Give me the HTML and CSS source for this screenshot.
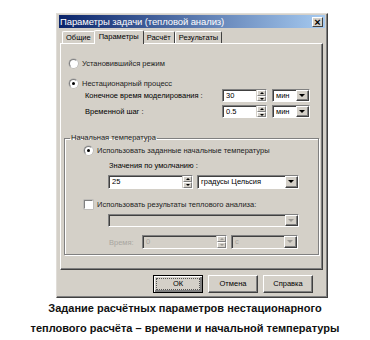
FILE: index.html
```html
<!DOCTYPE html>
<html lang="ru">
<head>
    <meta charset="UTF-8">
    <title>Параметры задачи</title>
    <link rel="stylesheet" href="styles.css">
</head>
<body>
    <div class="figure">
        <div class="dialog">
            <div class="titlebar">
                <span class="title">Параметры задачи (тепловой анализ)</span>
                <span class="close">×</span>
            </div>
            <div class="tabs">
                <span class="tab">Общие</span>
                <span class="tab active">Параметры</span>
                <span class="tab">Расчёт</span>
                <span class="tab">Результаты</span>
            </div>
            <div class="panel">
                <div class="option"><span class="radio"></span>Установившийся режим</div>
                <div class="option"><span class="radio checked"></span>Нестационарный процесс</div>
                <div class="field-row first">
                    <span class="field-label">Конечное время моделирования :</span>
                    <div class="spin w-time"><span class="value">30</span><span class="spin-btns"><i class="up"></i><i class="down"></i></span></div>
                    <div class="combo w-unit"><span class="value">мин</span><span class="drop"></span></div>
                </div>
                <div class="field-row">
                    <span class="field-label">Временной шаг :</span>
                    <div class="spin w-time"><span class="value">0.5</span><span class="spin-btns"><i class="up"></i><i class="down"></i></span></div>
                    <div class="combo w-unit"><span class="value">мин</span><span class="drop"></span></div>
                </div>

                <fieldset class="group">
                    <legend>Начальная температура</legend>
                    <div class="option sub"><span class="radio checked"></span>Использовать заданные начальные температуры</div>
                    <div class="hint">Значения по умолчанию :</div>
                    <div class="inline-row">
                        <div class="spin w-temp"><span class="value">25</span><span class="spin-btns"><i class="up"></i><i class="down"></i></span></div>
                        <div class="combo w-deg"><span class="value">градусы Цельсия</span><span class="drop"></span></div>
                    </div>
                    <div class="option sub check-row"><span class="check"></span>Использовать результаты теплового анализа:</div>
                    <div class="combo disabled w-full"><span class="value"></span><span class="drop"></span></div>
                    <div class="inline-row time-row disabled">
                        <span class="time-label">Время:</span>
                        <div class="spin w-temp"><span class="value">0</span><span class="spin-btns"><i class="up"></i><i class="down"></i></span></div>
                        <div class="combo w-tunit"><span class="value">с</span><span class="drop"></span></div>
                    </div>
                </fieldset>
            </div>
            <div class="buttons">
                <span class="btn default"><span class="focus">ОК</span></span>
                <span class="btn">Отмена</span>
                <span class="btn">Справка</span>
            </div>
        </div>
        <p class="caption">Задание расчётных параметров нестационарного<br>теплового расчёта – времени и начальной температуры</p>
    </div>
</body>
</html>
```

FILE: styles.css
```css
body {
    margin: 0;
    background: #fff;
    font-family: 'Liberation Sans', Arial, sans-serif;
}
.figure { padding-top: 13px; }
.dialog {
    margin-left: 56px;
    width: 266px;
    padding: 1px 2px;
    background: #d4d0c8;
    border: 1px solid;
    border-color: #e0ddd8 #404040 #404040 #e0ddd8;
    box-shadow: inset -1px -1px 0 #808080;
    font-size: 7.5px;
    color: #000;
}
.titlebar {
    display: flex;
    align-items: center;
    justify-content: space-between;
    height: 13px;
    padding: 0 2px 0 1px;
    background: linear-gradient(to right, #0a246a, #a6caf0);
    color: #fff;
}
.title { font-size: 9.5px; letter-spacing: -0.1px; }
.close {
    width: 11px;
    height: 10px;
    line-height: 9px;
    text-align: center;
    background: #d4d0c8;
    color: #000;
    font-size: 11px;
    font-weight: bold;
    border: 1px solid;
    border-color: #fff #404040 #404040 #fff;
    box-sizing: border-box;
}
.tabs {
    display: flex;
    align-items: flex-end;
    height: 14px;
    margin-top: 1px;
    padding-left: 3px;
}
.tab {
    height: 11px;
    line-height: 11px;
    padding: 0 3px;
    border: 1px solid;
    border-bottom: none;
    border-color: #fff #404040 #404040 #fff;
    border-radius: 2px 2px 0 0;
}
.tab.active {
    height: 13px;
    line-height: 12px;
    padding: 0 4px;
    margin: 0 -1px -1px;
    position: relative;
    background: #d4d0c8;
    z-index: 1;
}
.panel {
    height: 227px;
    margin: 0 2px 0 1px;
    padding-top: 12px;
    border: 1px solid;
    border-color: #fff #404040 #404040 #fff;
    box-shadow: inset -1px -1px 0 #808080;
    box-sizing: border-box;
}
.option {
    display: flex;
    align-items: center;
    height: 14px;
    margin-bottom: 6px;
    padding-left: 8px;
    color: #222;
}
.radio, .check {
    width: 7px;
    height: 7px;
    margin-right: 4px;
    background: #fff;
    border: 1px solid;
    border-color: #808080 #fff #fff #808080;
    box-shadow: 0 0 0 0.5px #aaa;
    border-radius: 50%;
    position: relative;
}
.radio.checked::after {
    content: '';
    position: absolute;
    left: 2px;
    top: 2px;
    width: 3px;
    height: 3px;
    border-radius: 50%;
    background: #000;
}
.check { border-radius: 0; }
.field-row {
    display: flex;
    align-items: center;
    height: 13px;
    margin-top: 3px;
    padding-left: 24px;
}
.field-row.first { margin-top: -7px; }
.field-label { width: 137px; }
.spin, .combo {
    display: flex;
    align-items: stretch;
    height: 13px;
    box-sizing: border-box;
    background: #fff;
    border: 1px solid;
    border-color: #808080 #fff #fff #808080;
    box-shadow: inset 1px 1px 0 #404040;
}
.value {
    flex: 1;
    padding: 1px 0 0 3px;
    line-height: 10px;
    white-space: nowrap;
    overflow: hidden;
}
.spin-btns {
    display: flex;
    flex-direction: column;
    width: 9px;
    border-left: 1px solid #d4d0c8;
}
.spin-btns i {
    flex: 1;
    position: relative;
    background: #d4d0c8;
    border: 1px solid;
    border-color: #fff #808080 #808080 #fff;
}
.spin-btns i::after {
    content: '';
    position: absolute;
    left: 2px;
    top: 1px;
    border-left: 2px solid transparent;
    border-right: 2px solid transparent;
}
.spin-btns .up::after { border-bottom: 2px solid #000; }
.spin-btns .down::after { border-top: 2px solid #000; }
.drop {
    width: 11px;
    position: relative;
    background: #d4d0c8;
    border: 1px solid;
    border-color: #fff #404040 #404040 #fff;
    box-shadow: inset -1px -1px 0 #808080;
}
.drop::after {
    content: '';
    position: absolute;
    left: 2px;
    top: 3px;
    border-left: 3px solid transparent;
    border-right: 3px solid transparent;
    border-top: 3px solid #000;
}
.w-time { width: 45px; margin-right: 5px; }
.w-unit { width: 38px; }
.w-temp { width: 85px; margin-right: 4px; }
.w-deg { width: 102px; }
.w-tunit { width: 67px; }
.w-full { width: 191px; margin-left: 43px; }
.group {
    margin: 15px 3px 0 3px;
    padding: 0 0 5px 0;
    border: 1px solid #808080;
    box-shadow: inset 1px 1px 0 #fff, 1px 1px 0 #fff;
}
.group legend {
    margin-left: 5px;
    padding: 0 1px;
    line-height: 10px;
    color: #222;
}
.option.sub {
    padding-left: 19px;
    margin-bottom: 3px;
}
.hint {
    height: 12px;
    line-height: 12px;
    padding-left: 44px;
    margin-bottom: 3px;
}
.inline-row {
    display: flex;
    align-items: center;
    padding-left: 43px;
    height: 14px;
}
.inline-row .spin, .inline-row .combo { height: 14px; }
.check-row { margin-top: 8px; }
.disabled { color: #a8a6a0; }
.combo.disabled { background: #d4d0c8; }
.disabled .spin, .disabled .combo { background: #d4d0c8; }
.disabled .drop::after, .disabled .spin-btns i::after { border-top-color: #9a9893; border-bottom-color: #9a9893; }
.time-row { margin-top: 8px; padding-left: 44px; }
.time-label { width: 33px; }
.buttons {
    display: flex;
    justify-content: flex-end;
    gap: 5px;
    padding: 5px 12px 3px 0;
}
.btn {
    width: 50px;
    height: 18px;
    line-height: 16px;
    text-align: center;
    box-sizing: border-box;
    border: 1px solid;
    border-color: #fff #404040 #404040 #fff;
    box-shadow: inset -1px -1px 0 #808080;
}
.btn.default {
    display: flex;
    padding: 2px;
    border: 1px solid #000;
    box-shadow: inset 1px 1px 0 #fff, inset -2px -2px 0 #808080;
}
.focus {
    flex: 1;
    line-height: 10px;
    border: 1px dotted #555;
}
.caption {
    margin: 0;
    text-align: center;
    font-size: 11px;
    font-weight: bold;
    line-height: 20px;
    color: #111;
}
```
